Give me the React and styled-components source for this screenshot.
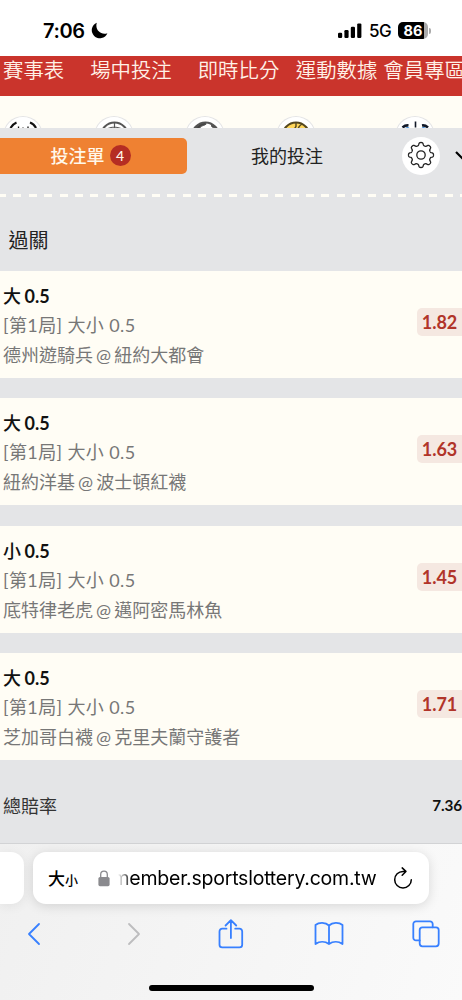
import styled, { createGlobalStyle } from 'styled-components';

const navItems = [
  { label: '賽事表', gap: 26 },
  { label: '場中投注', gap: 26 },
  { label: '即時比分', gap: 16.5 },
  { label: '運動數據', gap: 6 },
  { label: '會員專區', gap: 0 },
];

const bets = [
  { pick: '大', line: '0.5', market: '[第1局] 大小 0.5', away: '德州遊騎兵', home: '紐約大都會', odds: '1.82' },
  { pick: '大', line: '0.5', market: '[第1局] 大小 0.5', away: '紐約洋基', home: '波士頓紅襪', odds: '1.63' },
  { pick: '小', line: '0.5', market: '[第1局] 大小 0.5', away: '底特律老虎', home: '邁阿密馬林魚', odds: '1.45' },
  { pick: '大', line: '0.5', market: '[第1局] 大小 0.5', away: '芝加哥白襪', home: '克里夫蘭守護者', odds: '1.71' },
];

// eight rounded teeth around the centre of a 28px box
const gearPath = () => {
  const points = [];
  for (let i = 0; i < 240; i += 1) {
    const a = (i / 240) * Math.PI * 2;
    const wave = Math.tanh(1.8 * Math.cos(8 * a)) / Math.tanh(1.8);
    const r = 11.1 + 1.4 * wave;
    points.push(`${(14 + r * Math.sin(a)).toFixed(2)} ${(14 - r * Math.cos(a)).toFixed(2)}`);
  }
  return `M${points.join('L')}Z`;
};

const StatusBar = () => (
  <Status>
    <Clock>7:06</Clock>
    <svg width="17" height="17" viewBox="0 0 17 17">
      <path d="M5.8.7A8.1 8.1 0 1 0 16.400 11.200C10 13.500 3.600 8 5.800.7Z" fill="#000" />
    </svg>
    <Signal>
      <svg width="24" height="16" viewBox="0 0 24 16">
        <rect x="0" y="9.7" width="4.2" height="5.3" rx="1.2" />
        <rect x="6.4" y="7" width="4.2" height="8" rx="1.2" />
        <rect x="12.8" y="3.7" width="4.2" height="11.3" rx="1.2" />
        <rect x="19.2" y="0.4" width="4.2" height="14.6" rx="1.2" />
      </svg>
      <Network>5G</Network>
      <Battery>86</Battery>
      <BatteryCap />
    </Signal>
  </Status>
);

const SportIcons = () => (
  <Sports>
    <Sport $gap={51}>
      <svg width="40" height="40" viewBox="0 0 40 40" fill="none" stroke="#111" strokeWidth="2.2">
        <path d="M7.5 12q2.5-4 6-5.5M27 6.5q4 1.5 6 5.5" />
        <path d="M15.5 10.5v2M20 11.5v1M25 10.5v2" strokeWidth="1.3" />
      </svg>
    </Sport>
    <Sport $gap={51}>
      <svg width="40" height="40" viewBox="0 0 40 40" fill="none" stroke="#555" strokeWidth="2">
        <circle cx="20.5" cy="20" r="13.5" />
        <path d="M20.5 6v6M14 12.5q6-3 13 0" strokeWidth="1.2" />
      </svg>
    </Sport>
    <Sport $gap={51}>
      <svg width="40" height="40" viewBox="0 0 40 40" fill="none" stroke="#555" strokeWidth="2">
        <circle cx="20.5" cy="20" r="13.5" />
        <path d="M10.5 12q4-5 10-5.5 2 2-2 3-3 0-4 3zM26 8l5 4-4-1z" fill="#444" strokeWidth="1" />
      </svg>
    </Sport>
    <Sport $gap={79}>
      <svg width="40" height="40" viewBox="0 0 40 40" fill="none" stroke="#54471f" strokeWidth="2">
        <circle cx="20" cy="20" r="13.5" fill="#ffd65a" />
        <path d="M20 6.5v4l-2 3M26 8q-3 2-4 5" strokeWidth="1.4" />
      </svg>
    </Sport>
    <Sport $gap={0}>
      <svg width="40" height="40" viewBox="0 0 40 40" fill="none" stroke="#111827" strokeWidth="2.6">
        <path d="M7.5 11.500q3-2.500 6-2M27 9.500q3-.5 6 2" />
        <path d="M20.5 5.5v6" strokeWidth="1.6" />
        <path d="M10 13q2-2 4-1M27 12q2-1 4 1" stroke="#3f8edb" strokeWidth="1.2" />
      </svg>
    </Sport>
  </Sports>
);

const BetCard = ({ bet }) => (
  <Card>
    <div>
      <Pick>
        {bet.pick} <strong>{bet.line}</strong>
      </Pick>
      <Market>{bet.market}</Market>
      <Teams>
        {bet.away} @ {bet.home}
      </Teams>
    </div>
    <Odds>{bet.odds}</Odds>
  </Card>
);

const Browser = () => (
  <BrowserBar>
    <AddressRow>
      <PreviousTab />
      <Address>
        <TextSize>
          大<small>小</small>
        </TextSize>
        <Lock width="12" height="17" viewBox="0 0 12 17">
          <path d="M2.7 8V4.5a3.3 3.3 0 0 1 6.6 0V8" fill="none" stroke="#8a8a8e" strokeWidth="1.3" />
          <rect x="0.4" y="7" width="11.2" height="9.2" rx="1.6" fill="#8a8a8e" />
        </Lock>
        <Url>
          <span>member.sportslottery.com.tw</span>
        </Url>
        <svg width="20" height="23" viewBox="0 0 20 23" fill="none" stroke="#000" strokeWidth="1.5" strokeLinecap="round" strokeLinejoin="round">
          <path d="M12.2 4.4H10A8.3 8.3 0 1 0 18.3 12.7M9.2.9l3.7 3.5-3.7 3.8" />
        </svg>
      </Address>
    </AddressRow>
    <Tools>
      <svg width="14" height="24" viewBox="0 0 14 24">
        <path d="M12 2 2 12l10 10" />
      </svg>
      <Disabled width="14" height="24" viewBox="0 0 14 24">
        <path d="m2 2 10 10L2 22" />
      </Disabled>
      <svg width="26" height="30" viewBox="0 0 26 30">
        <path d="M8.5 9.7H4.2A2.7 2.7 0 0 0 1.5 12.4v13.3a2.7 2.7 0 0 0 2.7 2.7h17.3a2.7 2.7 0 0 0 2.7-2.7V12.4a2.7 2.7 0 0 0-2.7-2.7h-4.3M12.9 19V1.5M7.6 6.5l5.3-5.3 5.3 5.3" />
      </svg>
      <svg width="30" height="26" viewBox="0 0 30 26">
        <path d="M15 4.5C11.5 1 5 1 1.5 4v19c4-2.8 9.5-2.8 13.5 0 4-2.8 9.5-2.8 13.5 0V4C25 1 18.5 1 15 4.5V23" />
      </svg>
      <svg width="28" height="28" viewBox="0 0 28 28">
        <path d="M7.7 20.4H4a2.7 2.7 0 0 1-2.7-2.7V4A2.7 2.7 0 0 1 4 1.3h14A2.7 2.7 0 0 1 20.7 4v3.3" />
        <rect x="7.7" y="7.3" width="19" height="19" rx="2.7" />
      </svg>
    </Tools>
    <HomeIndicator />
  </BrowserBar>
);

const App = () => (
  <>
    <GlobalStyle />
    <Screen>
      <StatusBar />
      <Nav>
        {navItems.map((item) => (
          <NavItem key={item.label} $gap={item.gap}>
            {item.label}
          </NavItem>
        ))}
      </Nav>
      <SportIcons />
      <Slip>
        <Tabs>
          <ActiveTab>
            <span>投注單</span>
            <Count>4</Count>
          </ActiveTab>
          <Tab>我的投注</Tab>
          <Settings>
            <svg width="28" height="28" viewBox="0 0 28 28" fill="none" stroke="#222" strokeWidth="1.3">
              <path d={gearPath()} strokeLinejoin="round" />
              <circle cx="14" cy="14" r="4.2" />
            </svg>
          </Settings>
          <Chevron width="14" height="12" viewBox="0 0 14 12">
            <path d="m1 2 6 6 6-6" fill="none" stroke="#000" strokeWidth="2.2" />
          </Chevron>
        </Tabs>
        <Dashes />
        <Heading>過關</Heading>
        <Cards>
          {bets.map((bet) => (
            <BetCard key={bet.odds} bet={bet} />
          ))}
        </Cards>
        <Total>
          <span>總賠率</span>
          <TotalOdds>7.36</TotalOdds>
        </Total>
      </Slip>
      <Browser />
    </Screen>
  </>
);

const GlobalStyle = createGlobalStyle`
  * {
    box-sizing: border-box;
  }
  body {
    margin: 0;
    overflow: hidden;
    font-family: Lato, 'Noto Sans CJK TC', sans-serif;
  }
  svg {
    display: block;
    flex-shrink: 0;
  }
`;

const Screen = styled.main`
  display: flex;
  flex-direction: column;
  width: 462px;
  height: 1000px;
  overflow: hidden;
  background: #fffdf5;
`;

const Status = styled.header`
  display: flex;
  align-items: center;
  height: 55.5px;
  flex-shrink: 0;
  padding: 6px 33px 0 43px;
  background: #fff;
`;
const Clock = styled.span`
  width: 47.5px;
  font: 600 20px Inter, sans-serif;
  letter-spacing: -0.4px;
`;
const Signal = styled.div`
  display: flex;
  align-items: center;
  margin-left: auto;
`;
const Network = styled.span`
  width: 22px;
  margin: 0 7px 0 7px;
  font: 450 17px Inter, sans-serif;
  letter-spacing: -0.5px;
`;
const Battery = styled.span`
  width: 30px;
  height: 17px;
  margin-right: -1px;
  border-radius: 5px;
  background: linear-gradient(to right, #000 86%, #aaa 86%);
  color: #fff;
  font: 700 14.5px/17px Inter, sans-serif;
  text-align: center;
`;
const BatteryCap = styled.span`
  width: 2px;
  height: 6px;
  margin-left: 1.5px;
  margin-right: -1.5px;
  border-radius: 0 2px 2px 0;
  background: #aaa;
`;

const Nav = styled.nav`
  display: flex;
  height: 40px;
  flex-shrink: 0;
  padding-left: 3px;
  background: #ca342c;
  color: #fff1e7;
`;
const NavItem = styled.span`
  flex-shrink: 0;
  margin-right: ${({ $gap }) => $gap}px;
  font-size: 20.4px;
  font-weight: 350;
  line-height: 29px;
  white-space: nowrap;
`;

const Sports = styled.div`
  display: flex;
  height: 32.5px;
  flex-shrink: 0;
  padding: 20.5px 0 0 3px;
  overflow: hidden;
`;
const Sport = styled.span`
  width: 40px;
  height: 40px;
  flex-shrink: 0;
  margin-right: ${({ $gap }) => $gap}px;
  border-radius: 50%;
  background: #fff;
  box-shadow: inset 0 0 0 1px #e5e5e5;
`;

const Slip = styled.section`
  height: 715px;
  flex-shrink: 0;
  background: #e4e5e7;
`;
const Tabs = styled.div`
  display: flex;
  align-items: center;
  height: 56px;
  padding-bottom: 1px;
  overflow: hidden;
`;
const ActiveTab = styled.div`
  display: flex;
  align-items: center;
  width: 187px;
  height: 36px;
  flex-shrink: 0;
  padding-left: 50.5px;
  border-radius: 0 5px 5px 0;
  background: #ef8132;
  color: #fff8ea;
  font-size: 18px;
  font-weight: 500;
  > span:first-child {
    padding-bottom: 2px;
  }
`;
const Count = styled.span`
  width: 21px;
  height: 21px;
  margin-left: 5px;
  border-radius: 50%;
  background: #b52d23;
  font-size: 14px;
  line-height: 21px;
  text-align: center;
`;
const Tab = styled.span`
  width: 151px;
  margin-left: 64px;
  padding-bottom: 2px;
  flex-shrink: 0;
  color: #222;
  font-size: 18px;
`;
const Settings = styled.span`
  display: grid;
  place-items: center;
  width: 38px;
  height: 38px;
  flex-shrink: 0;
  padding-bottom: 2px;
  border-radius: 50%;
  background: #fff;
`;
const Chevron = styled.svg`
  margin-left: 15px;
`;
const Dashes = styled.div`
  height: 3px;
  margin-top: 10px;
  background: repeating-linear-gradient(to right, #fffdf5 0 6px, transparent 6px 13.4px, #fffdf5 13.4px 15.4px);
`;
const Heading = styled.h2`
  height: 73.5px;
  margin: 0;
  padding: 27px 0 0 8.5px;
  color: #222;
  font-size: 20px;
  font-weight: 400;
  line-height: 32px;
`;
const Cards = styled.div`
  display: flex;
  flex-direction: column;
  gap: 20.5px;
`;
const Card = styled.article`
  display: flex;
  justify-content: space-between;
  height: 107px;
  padding: 11px 0 0 3px;
  background: #fffdf5;
`;
const Pick = styled.div`
  color: #111;
  font-size: 18px;
  font-weight: 500;
  line-height: 29px;
  word-spacing: -1px;
  strong {
    font-weight: 700;
  }
`;
const Market = styled.div`
  color: #777;
  font-size: 18px;
  line-height: 29px;
  letter-spacing: 0.4px;
`;
const Teams = styled.div`
  color: #777;
  font-size: 18px;
  line-height: 30px;
  word-spacing: -1.5px;
`;
const Odds = styled.span`
  width: 45px;
  height: 28px;
  margin-top: 26px;
  border-radius: 5px 0 0 5px;
  background: #f5e8e1;
  color: #b13429;
  font-size: 18px;
  font-weight: 700;
  line-height: 28px;
  text-align: center;
`;
const Total = styled.div`
  display: flex;
  justify-content: space-between;
  align-items: center;
  height: 89px;
  padding-left: 3px;
  color: #333;
  font-size: 18px;
`;
const TotalOdds = styled.strong`
  padding-top: 1px;
  color: #111;
  font-size: 15.3px;
  letter-spacing: -0.1px;
`;

const BrowserBar = styled.footer`
  height: 157px;
  border-top: 1px solid #d2d3d5;
  background: linear-gradient(110deg, #f0f0f0, #fafafa);
`;
const AddressRow = styled.div`
  display: flex;
  gap: 9.5px;
  padding-top: 8px;
`;
const PreviousTab = styled.div`
  width: 23.5px;
  height: 52px;
  border-radius: 0 13px 13px 0;
  background: #fff;
  box-shadow: 0 2px 12px #0001;
`;
const Address = styled.div`
  display: flex;
  align-items: center;
  width: 396px;
  height: 52px;
  padding-left: 15px;
  border-radius: 13px;
  background: #fff;
  box-shadow: 0 2px 12px #0002;
`;
const TextSize = styled.span`
  width: 50px;
  padding-bottom: 2px;
  font-size: 17px;
  font-weight: 500;
  small {
    font-size: 13px;
  }
`;
const Lock = styled.svg`
  margin-right: 7.5px;
`;
const Url = styled.span`
  display: flex;
  justify-content: flex-end;
  width: 259px;
  margin-right: 16px;
  overflow: hidden;
  color: #000;
  font: 400 19.5px Inter, sans-serif;
  letter-spacing: -0.22px;
  white-space: nowrap;
  mask-image: linear-gradient(to right, transparent, #000 14px);
`;
const Tools = styled.div`
  display: grid;
  grid-template-columns: 68px 132px 62px 133px 62px;
  align-items: center;
  justify-items: center;
  height: 59px;
  fill: none;
  stroke: #3880ff;
  stroke-width: 1.8;
  stroke-linecap: round;
  stroke-linejoin: round;
`;
const Disabled = styled.svg`
  stroke: #bdbdbf;
`;
const HomeIndicator = styled.div`
  width: 165px;
  height: 6px;
  margin: 21.5px auto 0;
  border-radius: 3px;
  background: #000;
`;

export default App;
